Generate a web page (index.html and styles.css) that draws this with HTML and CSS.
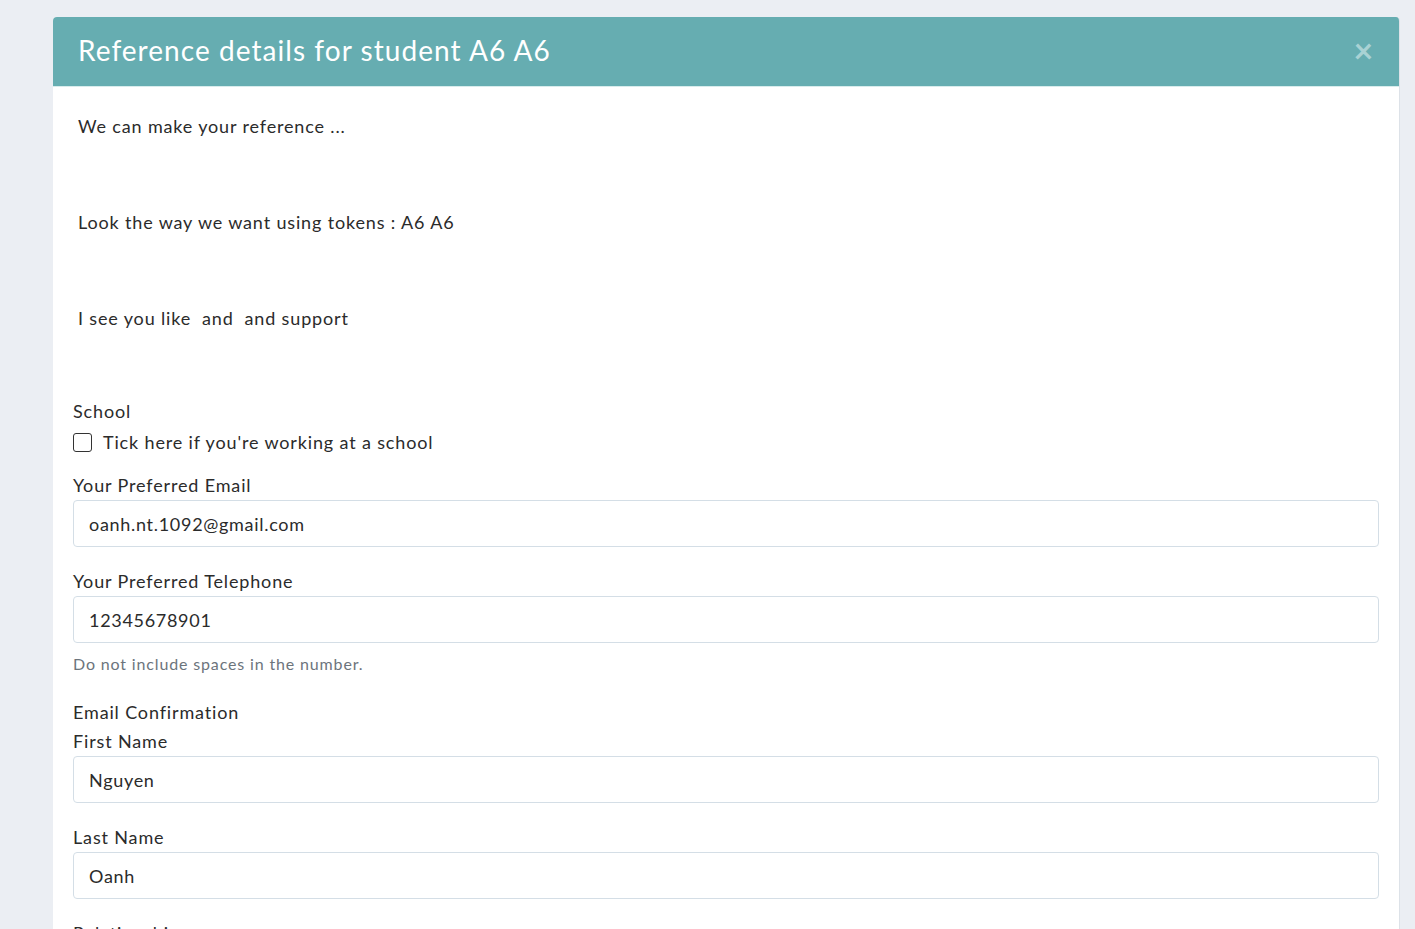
FILE: index.html
```html
<!DOCTYPE html>
<html>
<head>
    <title>Reference details</title>
    <link rel="stylesheet" href="styles.css">
</head>
<body>
    <div class="modal">
        <div class="modal-header">
            <h1 class="modal-title">Reference details for student A6 A6</h1>
            <span class="close">&times;</span>
        </div>
        <div class="modal-body">
            <div class="intro">
                <p>We can make your reference ...</p>
                <p>Look the way we want using tokens : A6 A6</p>
                <p>I see you like &nbsp;and &nbsp;and support</p>
            </div>

            <div class="form-group school">
                <label class="label">School</label>
                <label class="check">
                    <span class="box"></span>
                    Tick here if you're working at a school
                </label>
            </div>

            <div class="form-group">
                <label class="label" for="email">Your Preferred Email</label>
                <input id="email" class="form-control" type="text" value="oanh.nt.1092@gmail.com">
            </div>

            <div class="form-group">
                <label class="label" for="phone">Your Preferred Telephone</label>
                <input id="phone" class="form-control" type="text" value="12345678901">
                <div class="help">Do not include spaces in the number.</div>
            </div>

            <div class="section-title">Email Confirmation</div>

            <div class="form-group">
                <label class="label" for="first">First Name</label>
                <input id="first" class="form-control" type="text" value="Nguyen">
            </div>

            <div class="form-group">
                <label class="label" for="last">Last Name</label>
                <input id="last" class="form-control" type="text" value="Oanh">
            </div>

            <div class="form-group">
                <label class="label" for="rel">Relationship</label>
                <input id="rel" class="form-control" type="text" value="">
            </div>
        </div>
    </div>
</body>
</html>
```

FILE: styles.css
```css
html, body {
    height: 100%;
    overflow: hidden;
}

body {
    margin: 0;
    padding: 17px 15px 0 53px;
    background-color: #ebeef3;
    font-family: Lato, "Open Sans", sans-serif;
    color: #2b2b2b;
    font-size: 18px;
    letter-spacing: 0.85px;
    box-sizing: border-box;
}

.modal {
    background-color: #fff;
    border-radius: 4px 4px 0 0;
    border-right: 1px solid #dde2e8;
    min-height: 100%;
    overflow: hidden;
}

.modal-header {
    display: flex;
    justify-content: space-between;
    align-items: center;
    background-color: #66adb1;
    height: 70px;
    padding: 0 25px 3px 25px;
    border-bottom: 1px solid #d8ecec;
    box-sizing: border-box;
}

.modal-title {
    margin: 0;
    font-size: 28px;
    font-weight: 400;
    letter-spacing: 1.05px;
    color: #fff;
}

.close {
    color: #a9d2d4;
    font-size: 34px;
    font-weight: bold;
    line-height: 1;
}

.modal-body {
    padding: 27px 20px 0 20px;
}

.intro p {
    margin: 0 0 72px 5px;
    line-height: 24px;
}

.intro p:last-child {
    margin-bottom: 69px;
}

.form-group {
    margin-bottom: 22px;
}

.label {
    display: block;
    line-height: 24px;
    margin-bottom: 3px;
}

.school .label {
    margin-bottom: 7px;
}

.check {
    display: flex;
    align-items: center;
    gap: 11px;
    line-height: 24px;
    margin-bottom: -3px;
}

.box {
    width: 17px;
    height: 17px;
    border: 1.5px solid #333;
    border-radius: 3px;
}

.form-control {
    display: block;
    width: 100%;
    height: 47px;
    box-sizing: border-box;
    padding: 0 15px;
    border: 1px solid #d4dee6;
    border-radius: 4px;
    font-family: inherit;
    font-size: 18px;
    letter-spacing: 0.7px;
    color: #2b2b2b;
    outline: none;
}

.help {
    margin-top: 9px;
    font-size: 16px;
    line-height: 24px;
    color: #6c747c;
    margin-bottom: 24px;
}

.section-title {
    line-height: 24px;
    margin-bottom: 5px;
}
```
